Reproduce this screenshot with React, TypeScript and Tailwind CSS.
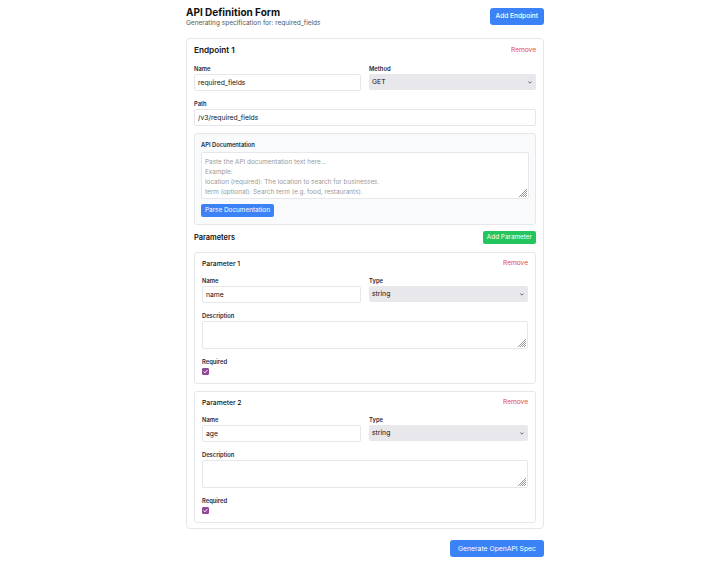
import { useState } from 'react';

const font = { fontFamily: 'Inter, "Noto Sans", sans-serif' };

type Param = { name: string; type: string; description: string; required: boolean };

function Label({ children }: { children: React.ReactNode }) {
  return <label className="block text-[5.8px] leading-[9px] font-semibold text-[#1f2937] mb-[1px]">{children}</label>;
}

function ResizeGrip() {
  return (
    <svg className="absolute right-[2px] bottom-[2px] w-[8px] h-[8px] text-[#555] pointer-events-none" viewBox="0 0 8 8" fill="none" stroke="currentColor" strokeWidth="0.6">
      <path d="M8 0L0 8M8 2L2 8M8 4L4 8M8 6L6 8" />
    </svg>
  );
}

function Select({ value, options }: { value: string; options: string[] }) {
  return (
    <div className="relative">
      <select
        defaultValue={value}
        className="block w-full h-[16px] appearance-none bg-[#e7e7ec] rounded-[2px] pl-[3px] text-[6.8px] leading-[16px] text-[#111] outline-none"
      >
        {options.map((o) => (
          <option key={o}>{o}</option>
        ))}
      </select>
      <svg className="absolute right-[4px] top-[6.5px] w-[4px] h-[3px] text-[#444] pointer-events-none" viewBox="0 0 4 3" fill="none" stroke="currentColor" strokeWidth="0.8">
        <path d="M0.4 0.6L2 2.2L3.6 0.6" />
      </svg>
    </div>
  );
}

function TextInput({ value }: { value: string }) {
  return (
    <input
      defaultValue={value}
      className="block w-full h-[17px] border border-[#e5e7eb] rounded-[2px] bg-white px-[3px] text-[6.8px] text-[#111] outline-none"
    />
  );
}

function Checkbox({ checked }: { checked: boolean }) {
  return (
    <span className="relative block w-[7px] h-[7px]">
      <input type="checkbox" defaultChecked={checked} className="peer appearance-none block w-[7px] h-[7px] rounded-[1px] border border-gray-300 checked:bg-[#93479a] checked:border-[#93479a]" />
      <svg className="absolute inset-0 w-[7px] h-[7px] text-white pointer-events-none hidden peer-checked:block" viewBox="0 0 7 7" fill="none" stroke="currentColor" strokeWidth="1">
        <path d="M1.6 3.6L2.9 4.8L5.4 2.1" />
      </svg>
    </span>
  );
}

function ParameterCard({ index, param }: { index: number; param: Param }) {
  return (
    <div className="border border-[#e5e7eb] rounded-[3px] px-[7px] pt-[6px] pb-[8px] bg-white">
      <div className="flex items-center justify-between h-[9px]">
        <h4 className="text-[6.8px] font-medium text-[#111]">Parameter {index}</h4>
        <button className="text-[6.6px] text-[#e04848]">Remove</button>
      </div>
      <div className="grid grid-cols-2 gap-[8px] mt-[8px]">
        <div>
          <Label>Name</Label>
          <TextInput value={param.name} />
        </div>
        <div>
          <Label>Type</Label>
          <Select value={param.type} options={['string', 'integer', 'number', 'boolean', 'array', 'object']} />
        </div>
      </div>
      <div className="mt-[8px]">
        <Label>Description</Label>
        <div className="relative">
          <textarea
            defaultValue={param.description}
            className="block w-full h-[28px] resize-none border border-[#e5e7eb] rounded-[2px] bg-white px-[3px] py-[3px] text-[6.4px] outline-none"
          />
          <ResizeGrip />
        </div>
      </div>
      <div className="mt-[8px]">
        <Label>Required</Label>
        <div className="mt-[2px]">
          <Checkbox checked={param.required} />
        </div>
      </div>
    </div>
  );
}

const placeholder = `Paste the API documentation text here...
Example:
location (required): The location to search for businesses.
term (optional): Search term (e.g. food, restaurants).
radius (optional): Search radius in meters. Max value is 40000.`;

export default function App() {
  const [params] = useState<Param[]>([
    { name: 'name', type: 'string', description: '', required: true },
    { name: 'age', type: 'string', description: '', required: true },
  ]);

  return (
    <div className="min-h-screen bg-white text-[7px] leading-[9px]" style={font}>
      <div className="w-[358px] ml-[186px] pt-[5px] pb-[17px]">
        {/* Header */}
        <div className="flex items-center justify-between">
          <div>
            <h1 className="text-[10px] leading-[14px] font-bold text-[#111]">API Definition Form</h1>
            <p className="text-[6.5px] leading-[9px] text-[#555]">Generating specification for: required_fields</p>
          </div>
          <button className="h-[17px] px-[6px] rounded-[3px] bg-[#3b82f6] text-white text-[6.6px] font-medium">Add Endpoint</button>
        </div>

        {/* Endpoint card */}
        <div className="mt-[10px] border border-[#e5e7eb] rounded-[4px] px-[7px] pt-[6px] pb-[5px] bg-white">
          <div className="flex items-center justify-between h-[10px]">
            <h2 className="text-[8.2px] font-semibold text-[#111]">Endpoint 1</h2>
            <button className="text-[6.6px] text-[#e04848]">Remove</button>
          </div>

          <div className="grid grid-cols-2 gap-[8px] mt-[9px]">
            <div>
              <Label>Name</Label>
              <TextInput value="required_fields" />
            </div>
            <div>
              <Label>Method</Label>
              <Select value="GET" options={['GET', 'POST', 'PUT', 'PATCH', 'DELETE']} />
            </div>
          </div>

          <div className="mt-[8px]">
            <Label>Path</Label>
            <TextInput value="/v3/required_fields" />
          </div>

          {/* Documentation */}
          <div className="mt-[7px] border border-[#e5e7eb] rounded-[3px] bg-[#f9fafb] px-[6px] pt-[7px] pb-[7px]">
            <label className="block text-[5.8px] leading-[8px] font-semibold text-[#1f2937] mb-[3px]">API Documentation</label>
            <div className="relative">
              <textarea
                placeholder={placeholder}
                className="block w-full h-[47px] resize-none overflow-hidden border border-[#e5e7eb] rounded-[2px] bg-white px-[3px] pt-[4px] pb-0 text-[6.4px] leading-[10px] placeholder:text-[#9a9a9a] outline-none"
              />
              <ResizeGrip />
            </div>
            <button className="block mt-[5px] h-[13px] px-[4px] rounded-[2px] bg-[#3b82f6] text-white text-[6.4px]">Parse Documentation</button>
          </div>

          {/* Parameters */}
          <div className="mt-[6px] flex items-center justify-between">
            <h3 className="text-[7.4px] font-semibold text-[#111]">Parameters</h3>
            <button className="h-[13px] px-[4px] rounded-[2px] bg-[#22c55e] text-white text-[6.4px]">Add Parameter</button>
          </div>

          <div className="mt-[8px] space-y-[7px]">
            {params.map((p, i) => (
              <ParameterCard key={i} index={i + 1} param={p} />
            ))}
          </div>
        </div>

        <div className="mt-[11px] flex justify-end">
          <button className="h-[17px] w-[94px] rounded-[3px] bg-[#3b82f6] text-white text-[6.8px]">Generate OpenAPI Spec</button>
        </div>
      </div>
    </div>
  );
}
